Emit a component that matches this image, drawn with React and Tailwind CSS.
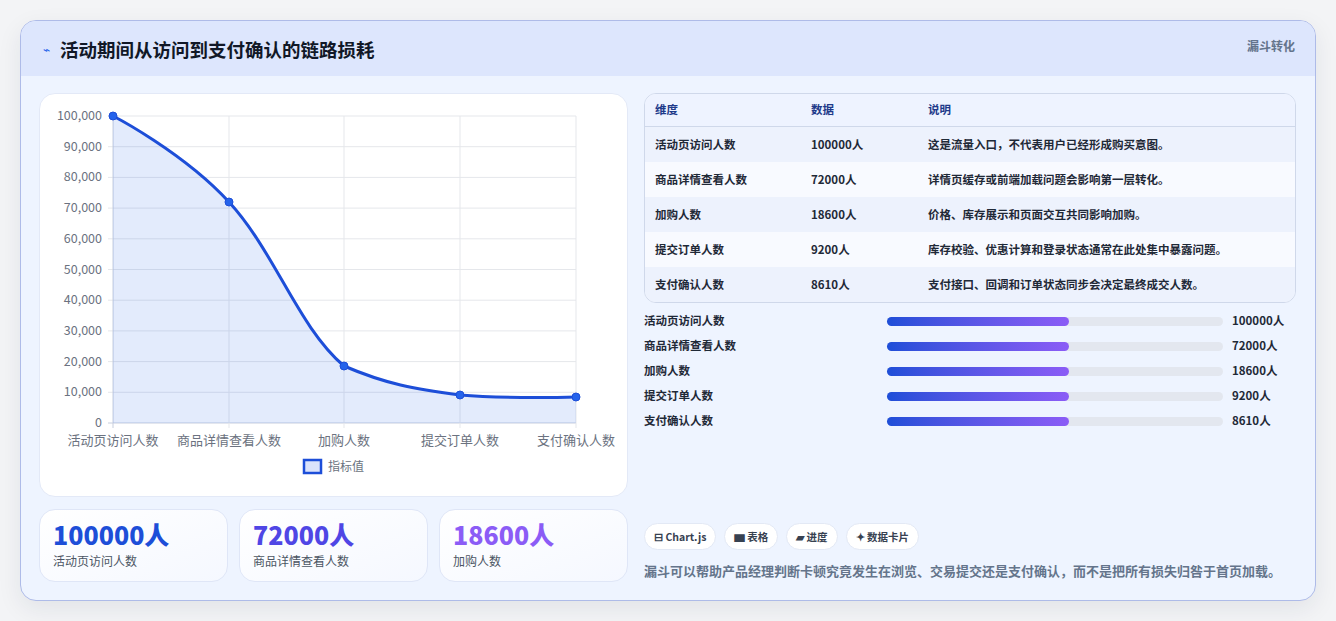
import React from "react";

const rows = [
  ["活动页访问人数", "100000人", "这是流量入口，不代表用户已经形成购买意图。"],
  ["商品详情查看人数", "72000人", "详情页缓存或前端加载问题会影响第一层转化。"],
  ["加购人数", "18600人", "价格、库存展示和页面交互共同影响加购。"],
  ["提交订单人数", "9200人", "库存校验、优惠计算和登录状态通常在此处集中暴露问题。"],
  ["支付确认人数", "8610人", "支付接口、回调和订单状态同步会决定最终成交人数。"],
];

function Chart() {
  const xs = [73, 189, 304, 420, 536];
  const top = 22, bottom = 329;
  const yTicks = [100000, 90000, 80000, 70000, 60000, 50000, 40000, 30000, 20000, 10000, 0];
  const pts = [[73, 22], [189, 108], [304, 272], [420, 301], [536, 303]];
  const line = "M73 22 C73 22 143 58 189 108 C235 158 258 233 304 272 C346 290 374 295 420 301 C466 305 536 303 536 303";
  return (
    <svg width="589" height="403" className="block" style={{ fontFamily: "'Noto Sans CJK SC', sans-serif" }}>
      {yTicks.map((v, i) => {
        const y = top + (i * (bottom - top)) / 10;
        return (
          <g key={v}>
            <line x1={68} x2={536} y1={y} y2={y} stroke={i === 10 ? "#c7cede" : "#e5e7eb"} />
            <text x={62} y={y + 4} textAnchor="end" fontSize="12.5" fill="#6b7280">{v.toLocaleString("en-US")}</text>
          </g>
        );
      })}
      {xs.map((x, i) => (
        <line key={i} x1={x} x2={x} y1={top} y2={bottom + 5} stroke={i === 0 ? "#c7cede" : "#e5e7eb"} />
      ))}
      <path d={line + ` L536 ${bottom} L73 ${bottom} Z`} fill="rgba(37,99,235,0.13)" />
      <path d={line} fill="none" stroke="#1d4ed8" strokeWidth="3" />
      {pts.map(([x, y], i) => (
        <circle key={i} cx={x} cy={y} r="4" fill="#2563eb" stroke="#1d4ed8" strokeWidth="1" />
      ))}
      {["活动页访问人数", "商品详情查看人数", "加购人数", "提交订单人数", "支付确认人数"].map((t, i) => (
        <text key={t} x={xs[i]} y={351} textAnchor="middle" fontSize="13" fill="#6b7280">{t}</text>
      ))}
      <rect x={264} y={366} width={17} height={13} fill="#dbe3fb" stroke="#1d4ed8" strokeWidth="2.5" />
      <text x={288} y={377} fontSize="12" fill="#6b7280">指标值</text>
    </svg>
  );
}

export default function App() {
  return (
    <div className="min-h-screen bg-[#f3f4f6] pt-5 px-5" style={{ fontFamily: "'Noto Sans CJK SC', 'Noto Sans', sans-serif" }}>
      <div className="w-[1296px] h-[581px] rounded-2xl border border-[#aebbe8] bg-[#eef4ff] overflow-hidden shadow-[0_8px_24px_rgba(30,41,59,0.08)]">
        <div className="h-[55px] bg-[#dde6fd] flex items-start justify-between pl-[22px] pr-5">
          <div className="flex items-center gap-2.5 pt-[14px]">
            <span className="text-[#2563eb] text-xs">⌁</span>
            <h1 className="text-[18.5px] font-bold text-[#111827] leading-7">活动期间从访问到支付确认的链路损耗</h1>
          </div>
          <div className="pt-4 text-[12px] font-bold text-[#64748b]">漏斗转化</div>
        </div>
        <div className="flex gap-4 pl-[18px] pr-[19px] pt-[17px]">
          <div className="w-[589px] flex flex-col gap-3">
            <div className="h-[404px] rounded-2xl bg-white border border-[#e3e9f7]">
              <Chart />
            </div>
            <div className="grid grid-cols-3 gap-[11px]">
              {[
                ["100000人", "活动页访问人数", "text-[#1d4ed8]"],
                ["72000人", "商品详情查看人数", "text-[#4f46e5]"],
                ["18600人", "加购人数", "text-[#8b5cf6]"],
              ].map(([v, l, c]) => (
                <div key={l} className="h-[73px] rounded-2xl bg-gradient-to-br from-white to-[#f5f8ff] border border-[#dfe6f7] px-[13px] pt-[8px]">
                  <div className={`text-[25px] font-extrabold leading-8 ${c}`}>{v}</div>
                  <div className="text-[12px] text-[#4b5563] mt-0.5">{l}</div>
                </div>
              ))}
            </div>
          </div>
          <div className="flex-1 flex flex-col">
            <div className="rounded-xl border border-[#cfd8ea] overflow-hidden bg-[#f8faff]">
              <div className="grid grid-cols-[156px_117px_1fr] h-[33px] items-center px-[10px] text-[11.5px] font-bold text-[#1e3a8a] bg-[#eef3ff] border-b border-[#cfd8ea]">
                <div>维度</div><div>数据</div><div>说明</div>
              </div>
              {rows.map(([a, b, c], i) => (
                <div key={a} className={`grid grid-cols-[156px_117px_1fr] h-[35px] items-center px-[10px] text-[11.5px] font-semibold text-[#1f2937] ${i % 2 === 0 ? "bg-[#edf2fd]" : "bg-[#f8faff]"}`}>
                  <div>{a}</div><div>{b}</div><div>{c}</div>
                </div>
              ))}
            </div>
            <div className="flex flex-col gap-[7px] mt-[9px]">
              {rows.map(([a, b]) => (
                <div key={a} className="flex items-center h-[18px] text-[11.5px] font-semibold text-[#1f2937]">
                  <div className="w-[243px]">{a}</div>
                  <div className="w-[336px] h-[9px] rounded-full bg-[#e3e7ef]">
                    <div className="w-[182px] h-full rounded-full bg-gradient-to-r from-[#1d4ed8] to-[#8b5cf6]" />
                  </div>
                  <div className="ml-[9px] font-bold">{b}</div>
                </div>
              ))}
            </div>
            <div className="flex gap-2 mt-[93px]">
              {["⊟ Chart.js", "▆ 表格", "▰ 进度", "✦ 数据卡片"].map((t) => (
                <div key={t} className="h-[27px] px-[9px] rounded-full bg-white border border-[#e3e9f5] flex items-center text-[10.5px] font-bold text-[#374151]">{t}</div>
              ))}
            </div>
            <p className="mt-[11px] text-[13px] font-semibold text-[#64748b]">漏斗可以帮助产品经理判断卡顿究竟发生在浏览、交易提交还是支付确认，而不是把所有损失归咎于首页加载。</p>
          </div>
        </div>
      </div>
    </div>
  );
}
